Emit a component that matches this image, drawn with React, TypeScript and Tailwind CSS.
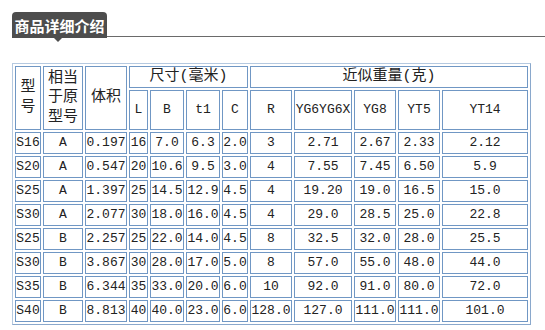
import React from "react";

const rows = [
  ["S16", "A", "0.197", "16", "7.0", "6.3", "2.0", "3", "2.71", "2.67", "2.33", "2.12"],
  ["S20", "A", "0.547", "20", "10.6", "9.5", "3.0", "4", "7.55", "7.45", "6.50", "5.9"],
  ["S25", "A", "1.397", "25", "14.5", "12.9", "4.5", "4", "19.20", "19.0", "16.5", "15.0"],
  ["S30", "A", "2.077", "30", "18.0", "16.0", "4.5", "4", "29.0", "28.5", "25.0", "22.8"],
  ["S25", "B", "2.257", "25", "22.0", "14.0", "4.5", "8", "32.5", "32.0", "28.0", "25.5"],
  ["S30", "B", "3.867", "30", "28.0", "17.0", "5.0", "8", "57.0", "55.0", "48.0", "44.0"],
  ["S35", "B", "6.344", "35", "33.0", "20.0", "6.0", "10", "92.0", "91.0", "80.0", "72.0"],
  ["S40", "B", "8.813", "40", "40.0", "23.0", "6.0", "128.0", "127.0", "111.0", "111.0", "101.0"],
];

const cell = "border border-[#7097c4] p-0 text-center align-middle whitespace-nowrap";

export default function App() {
  return (
    <div className="w-[545px] h-[330px] bg-white pl-[12px] pt-[12px] font-['Liberation_Mono','Noto_Sans_CJK_SC',monospace] text-[13px] text-[#222]">
      {/* title tab */}
      <div className="flex items-end">
        <div className="relative h-[26px] w-[95px] rounded-t-[4px] bg-[#4d4d4d] flex items-center justify-center">
          <span className="font-['Noto_Sans_CJK_SC',sans-serif] font-bold text-[15px] leading-none text-white">商品详细介绍</span>
          <span className="absolute left-[42px] top-[26px] w-0 h-0 border-l-[4px] border-r-[4px] border-t-[4px] border-l-transparent border-r-transparent border-t-[#4d4d4d]" />
        </div>
        <div className="flex-1 border-b border-[#6a6a6a] mb-[1px]" />
      </div>

      <table className="mt-[25px] table-fixed border-separate border-spacing-[2px] border border-t-[#b5c9e0] border-l-[#b5c9e0] border-r-[#8aa8cc] border-b-[#8aa8cc] leading-[20px]">
        <colgroup>
          <col className="w-[26px]" />
          <col className="w-[40px]" />
          <col className="w-[42px]" />
          <col className="w-[19px]" />
          <col className="w-[34px]" />
          <col className="w-[34px]" />
          <col className="w-[26px]" />
          <col className="w-[42px]" />
          <col className="w-[58px]" />
          <col className="w-[42px]" />
          <col className="w-[42px]" />
          <col className="w-[86px]" />
        </colgroup>
        <thead>
          <tr className="h-[22px]">
            <th rowSpan={2} className={`${cell} font-normal text-[15px]`}>
              <div className="h-[20px] leading-[20px]">型</div>
              <div className="h-[20px] leading-[20px]">号</div>
            </th>
            <th rowSpan={2} className={`${cell} font-normal text-[15px]`}>
              <div className="h-[19px] leading-[19px]">相当</div>
              <div className="h-[20px] leading-[20px]">于原</div>
              <div className="h-[19px] leading-[19px]">型号</div>
            </th>
            <th rowSpan={2} className={`${cell} font-normal text-[15px]`}>体积</th>
            <th colSpan={4} className={`${cell} font-normal text-[15px]`}>尺寸(毫米)</th>
            <th colSpan={5} className={`${cell} font-normal text-[15px]`}>近似重量(克)</th>
          </tr>
          <tr className="h-[40px]">
            {["L", "B", "t1", "C", "R", "YG6YG6X", "YG8", "YT5", "YT14"].map((h) => (
              <th key={h} className={`${cell} font-normal`}>{h}</th>
            ))}
          </tr>
        </thead>
        <tbody>
          {rows.map((r, i) => (
            <tr key={i} className="h-[22px]">
              {r.map((v, j) => (
                <td key={j} className={cell}>{v}</td>
              ))}
            </tr>
          ))}
        </tbody>
      </table>
    </div>
  );
}
